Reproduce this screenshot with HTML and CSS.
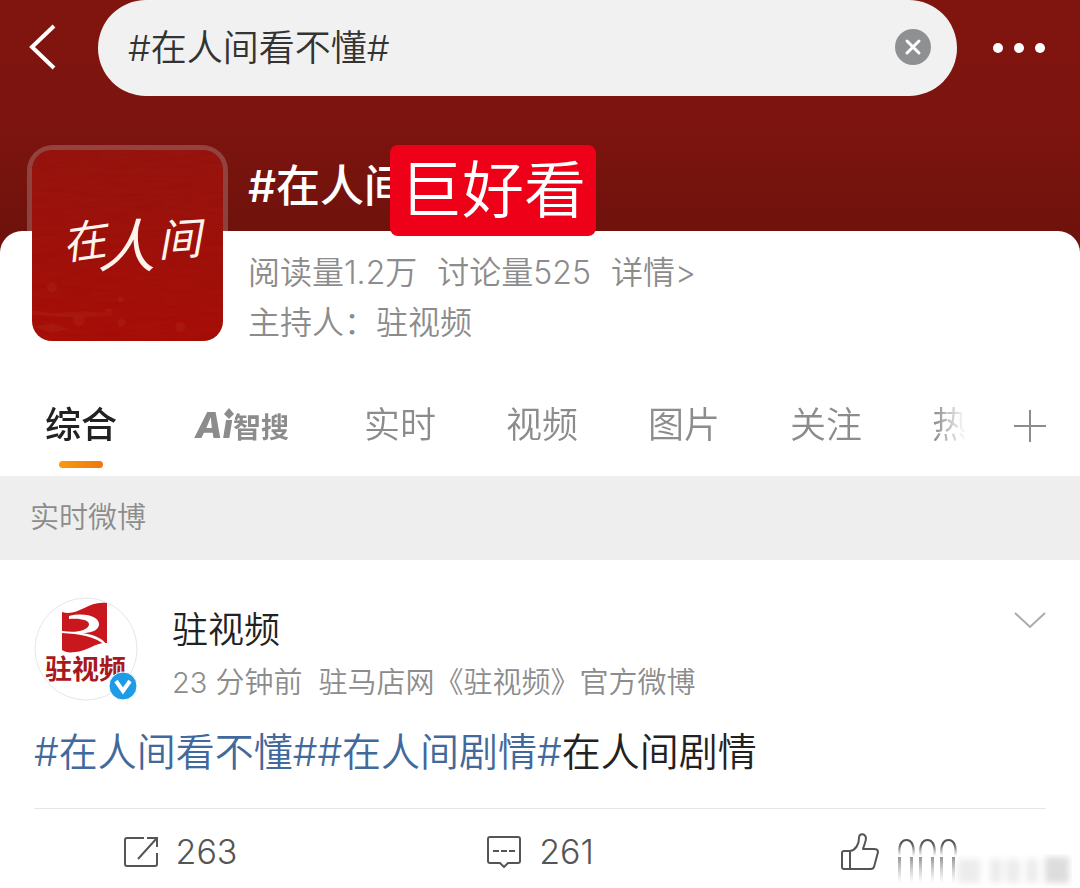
FILE: index.html
```html
<!DOCTYPE html>
<html lang="zh-CN">
<head>
    <meta charset="UTF-8">
    <meta name="viewport" content="width=device-width, initial-scale=1.0">
    <title>#在人间看不懂#</title>
    <link rel="stylesheet" href="styles.css">
</head>
<body>
    <div class="hero">
        <header class="topbar">
            <button class="back-btn" aria-label="返回">
                <svg width="30" height="48" viewBox="0 0 30 48"><path d="M26 2 4 23 26 44" fill="none" stroke="#fff" stroke-width="4"/></svg>
            </button>
            <div class="search">
                <input type="text" aria-label="搜索" value="#在人间看不懂#">
                <button class="clear-btn" aria-label="清除">
                    <svg width="36" height="36" viewBox="0 0 36 36"><circle cx="18" cy="18" r="18" fill="#8f9092"/><path d="M12 12 24 24M24 12 12 24" stroke="#fff" stroke-width="3" stroke-linecap="round"/></svg>
                </button>
            </div>
            <button class="more-btn" aria-label="更多">
                <svg width="54" height="12" viewBox="0 0 54 12" fill="#fff"><circle cx="6" cy="6" r="5"/><circle cx="27" cy="6" r="5"/><circle cx="48" cy="6" r="5"/></svg>
            </button>
        </header>

        <main class="sheet">
            <section class="topic">
                <div class="cover">
                    <svg viewBox="0 0 192 192">
                        <defs>
                            <linearGradient id="cover-bg" x1="0" y1="0" x2="0" y2="1">
                                <stop offset="0" stop-color="#95150e"/>
                                <stop offset=".45" stop-color="#9e120b"/>
                                <stop offset="1" stop-color="#a80e08"/>
                            </linearGradient>
                            <filter id="grain" x="0" y="0" width="1" height="1">
                                <feTurbulence type="fractalNoise" baseFrequency=".03 .25" numOctaves="2"/>
                                <feColorMatrix values="0 0 0 0 .3  0 0 0 0 0  0 0 0 0 0  .4 0 0 0 -.12"/>
                            </filter>
                        </defs>
                        <rect width="192" height="192" fill="url(#cover-bg)"/>
                        <rect width="192" height="192" filter="url(#grain)"/>
                        <g fill="#b2371c" opacity=".25">
                            <circle cx="20" cy="138" r="5"/><circle cx="47" cy="171" r="6"/><circle cx="89" cy="150" r="3"/>
                            <circle cx="77" cy="163" r="4"/><circle cx="90" cy="174" r="4"/><circle cx="149" cy="178" r="5"/>
                            <path d="M0 161 20 164 52 162 80 164 70 167 30 168 0 165zM3 178 20 174 36 180 20 184z"/>
                        </g>
                        <g class="cover-text">
                            <text x="30" y="108" transform="rotate(-8 50 90)">在</text>
                            <text class="big" x="66" y="118">人</text>
                            <text x="126" y="106" transform="rotate(-4 145 90)">间</text>
                        </g>
                    </svg>
                </div>
                <div class="topic-info">
                    <h1>#在人间</h1>
                    <p class="stats"><span>阅读量1.2万</span><span>讨论量525</span><a href="#">详情&gt;</a></p>
                    <p>主持人：驻视频</p>
                    <span class="sticker">巨好看</span>
                </div>
            </section>

            <nav class="tabs">
                <div class="tab-list">
                    <a href="#" class="active">综合</a>
                    <a href="#" class="ai-tab"><i>Ai</i><b>智搜</b>
                        <svg class="spark" width="12" height="12" viewBox="0 0 12 12"><rect width="12" height="12" fill="#fff"/><path d="M6 0 11 6 6 11 1 6z" fill="#8c8c8c"/></svg>
                    </a>
                    <a href="#">实时</a>
                    <a href="#">视频</a>
                    <a href="#">图片</a>
                    <a href="#">关注</a>
                    <a href="#">热</a>
                </div>
                <button class="add-btn" aria-label="添加">
                    <svg width="32" height="32" viewBox="0 0 32 32"><path d="M0 16H32M16 0V32" stroke="#8c8c8c" stroke-width="2"/></svg>
                </button>
            </nav>
        </main>
    </div>

    <h2 class="section-title">实时微博</h2>

    <article class="post">
        <div class="author">
            <a href="#" class="avatar" aria-label="驻视频">
                <svg width="104" height="104" viewBox="0 0 104 104">
                    <circle cx="52" cy="52" r="51" fill="#fff" stroke="#e6e6e6"/>
                    <path d="M28 15C44 20 54 3 73 6V46C62 45 54 54 41 55 35 56 31 55 28 53z" fill="#c9171e"/>
                    <path d="M35 19C52 15 66 20 65 28 64 34 56 36 49 36 62 38 72 43 73 50 62 39 45 37 28 36V34C42 36 53 34 55 28 56 23 46 21 35 22z" fill="#fff"/>
                    <text class="avatar-text" x="11" y="82">驻视频</text>
                </svg>
                <svg class="verified" width="30" height="30" viewBox="0 0 30 30"><circle cx="15" cy="15" r="14" fill="#1e9be6" stroke="#fff"/><path d="M8 10 15 20 22 10" fill="none" stroke="#fff" stroke-width="4"/></svg>
            </a>
            <div class="author-info">
                <a href="#" class="name">驻视频</a>
                <p><span>23 分钟前</span><span>驻马店网《驻视频》官方微博</span></p>
            </div>
            <button class="fold-btn" aria-label="收起">
                <svg width="32" height="18" viewBox="0 0 32 18"><path d="M1 2 16 16 31 2" fill="none" stroke="#aaa" stroke-width="2"/></svg>
            </button>
        </div>
        <p class="content"><a href="#">#在人间看不懂#</a><a href="#">#在人间剧情#</a>在人间剧情</p>
        <div class="actions">
            <button>
                <svg width="36" height="32" viewBox="0 0 36 32" fill="none" stroke="#555" stroke-width="2"><path d="M21 2H4Q2 2 2 4V28Q2 30 4 30H32Q34 30 34 28V17M24 2H34V11M34 2 15 23"/></svg>
                263
            </button>
            <button>
                <svg width="36" height="32" viewBox="0 0 36 32" fill="none" stroke="#555" stroke-width="2"><path d="M4 1H32Q34 1 34 3V25Q34 27 32 27H22L18 31 14 27H4Q2 27 2 25V3Q2 1 4 1z"/><path d="M7 15H29" stroke-dasharray="6 2"/></svg>
                261
            </button>
            <button class="like-btn">
                <svg width="38" height="38" viewBox="0 0 38 38" fill="none" stroke="#555" stroke-width="2" stroke-linejoin="round"><path d="M9 18C15 17 18 11 18 5 18 0 24 0 25 5 25 9 23 12 22 16H33Q37 16 37 19L33 34Q32 36 30 36H3Q1 36 1 34V20Q1 18 3 18zM9 18V36"/></svg>
                <span class="like-count">000</span>
                <svg class="smear" width="180" height="40" viewBox="0 0 180 40">
                    <defs>
                        <filter id="soft" x="-10%" width="120%"><feGaussianBlur stdDeviation="3"/></filter>
                        <linearGradient id="fade" x1="0" y1="0" x2="0" y2="1"><stop offset="0" stop-color="#666" stop-opacity=".7"/><stop offset="1" stop-color="#999" stop-opacity="0"/></linearGradient>
                    </defs>
                    <g filter="url(#soft)" fill="#ececec">
                        <rect x="66" y="12" width="22" height="24"/><rect x="98" y="12" width="12" height="24"/><rect x="114" y="12" width="14" height="24"/><rect x="134" y="12" width="12" height="24"/><rect x="153" y="10" width="24" height="26" fill="#ddd"/>
                    </g>
                    <g fill="url(#fade)">
                        <rect x="6" y="10" width="3" height="26"/><rect x="18" y="10" width="3" height="26"/><rect x="27" y="10" width="3" height="26"/><rect x="39" y="10" width="3" height="26"/><rect x="48" y="10" width="3" height="26"/><rect x="60" y="10" width="3" height="26"/>
                    </g>
                </svg>
            </button>
        </div>
    </article>
</body>
</html>
```
FILE: styles.css
```css
* {
    box-sizing: border-box;
}
body {
    margin: 0;
    background-color: #fff;
    color: #222;
    font-family: Inter, "Noto Sans CJK SC", sans-serif;
    font-weight: 350;
}
h1, h2, p {
    margin: 0;
}
a {
    color: inherit;
    text-decoration: none;
}
button {
    padding: 0;
    border: none;
    background: none;
    color: inherit;
    font: inherit;
    cursor: pointer;
}
svg {
    display: block;
}
.hero {
    background: linear-gradient(#80150f 0, #7e140f 120px, #6e120c 240px);
}
.topbar {
    display: grid;
    grid-template-columns: 98px 1fr 123px;
    height: 96px;
}
.back-btn {
    padding-left: 28px;
}
.more-btn {
    display: flex;
    align-items: center;
    justify-content: center;
}
.search {
    display: flex;
    align-items: center;
    padding: 0 26px 2px 30px;
    border-radius: 48px;
    background-color: #f1f1f1;
}
.search input {
    flex: 1;
    min-width: 0;
    padding: 0 0 4px;
    border: none;
    outline: none;
    background: none;
    color: #333;
    font: inherit;
    font-size: 36px;
}
.sheet {
    display: flow-root;
    margin-top: 135px;
    border-radius: 22px 22px 0 0;
    background-color: #fff;
}
.topic {
    display: flex;
    gap: 20px;
    margin-top: -86px;
    padding: 0 27px;
}
.cover {
    flex: none;
    width: 201px;
    height: 201px;
    border: 5px solid rgba(255, 255, 255, 0.2);
    border-radius: 26px;
}
.cover svg {
    width: 100%;
    border-radius: 20px;
}
.cover-text {
    fill: #fff4ec;
    font-size: 44px;
    font-style: italic;
    font-weight: 400;
}
.cover-text .big {
    font-size: 58px;
}
.topic-info {
    position: relative;
    flex: 1;
    color: #8c8c8c;
    font-size: 32px;
    line-height: 50px;
}
.topic-info h1 {
    margin-bottom: 21px;
    color: #fff;
    font-size: 44px;
    font-weight: 500;
    line-height: 82px;
}
.stats {
    display: flex;
    gap: 20px;
}
.sticker {
    position: absolute;
    top: 0;
    left: 142px;
    padding: 0 10px;
    border-radius: 8px;
    background-color: #ee0018;
    color: #fff;
    font-size: 62px;
    line-height: 91px;
}
.tabs {
    display: flex;
    height: 101px;
    margin-top: 27px;
    padding: 0 34px 0 45px;
    color: #8c8c8c;
    font-size: 36px;
    line-height: 101px;
}
.tab-list {
    display: flex;
    flex: 1;
    gap: 70px;
    min-width: 0;
    overflow: hidden;
    white-space: nowrap;
    -webkit-mask-image: linear-gradient(to right, #000 calc(100% - 80px), transparent calc(100% - 48px));
    mask-image: linear-gradient(to right, #000 calc(100% - 80px), transparent calc(100% - 48px));
}
.tab-list a {
    position: relative;
    flex: none;
}
.tab-list .active {
    color: #222;
    font-weight: 500;
}
.tab-list .active::after {
    content: "";
    position: absolute;
    bottom: 8px;
    left: 14px;
    width: 44px;
    height: 7px;
    border-radius: 4px;
    background: linear-gradient(to right, #f99d07, #ef7511);
}
.ai-tab {
    width: 107px;
    padding-left: 8px;
    font-size: 28px;
}
.ai-tab i {
    font-size: 36px;
    font-weight: 800;
}
.ai-tab b {
    font-weight: 700;
}
.spark {
    position: absolute;
    top: 33px;
    left: 36px;
}
.add-btn {
    display: flex;
    align-items: center;
}
.section-title {
    padding: 0 30px;
    background-color: #eee;
    color: #8c8c8c;
    font-size: 29px;
    font-weight: 350;
    line-height: 84px;
}
.post {
    padding: 37px 34px 0;
}
.author {
    display: flex;
    align-items: flex-start;
    gap: 34px;
}
.avatar {
    position: relative;
    flex: none;
}
.avatar-text {
    fill: #a8181c;
    font-size: 27px;
    font-weight: 700;
}
.verified {
    position: absolute;
    right: 0;
    bottom: 0;
}
.author-info {
    flex: 1;
    padding-top: 6px;
}
.name {
    display: block;
    font-size: 36px;
    line-height: 54px;
}
.author-info p {
    display: flex;
    gap: 16px;
    color: #8c8c8c;
    font-size: 29px;
    line-height: 52px;
}
.fold-btn {
    padding-top: 14px;
}
.content {
    margin-top: 11px;
    padding-bottom: 24px;
    border-bottom: 1px solid #e6e6e6;
    font-size: 39px;
    line-height: 64px;
}
.content a {
    color: #42699c;
}
.actions {
    display: grid;
    grid-template-columns: repeat(3, 1fr);
    margin: 0 -34px;
    color: #555;
    font-size: 34px;
    line-height: 42px;
}
.actions button {
    position: relative;
    display: flex;
    align-items: center;
    justify-content: center;
    gap: 17px;
    padding: 22px 0 14px;
}
.like-count {
    -webkit-mask-image: linear-gradient(#000 30%, transparent 60%);
    mask-image: linear-gradient(#000 30%, transparent 60%);
}
.smear {
    position: absolute;
    right: 8px;
    bottom: 0;
}
```
